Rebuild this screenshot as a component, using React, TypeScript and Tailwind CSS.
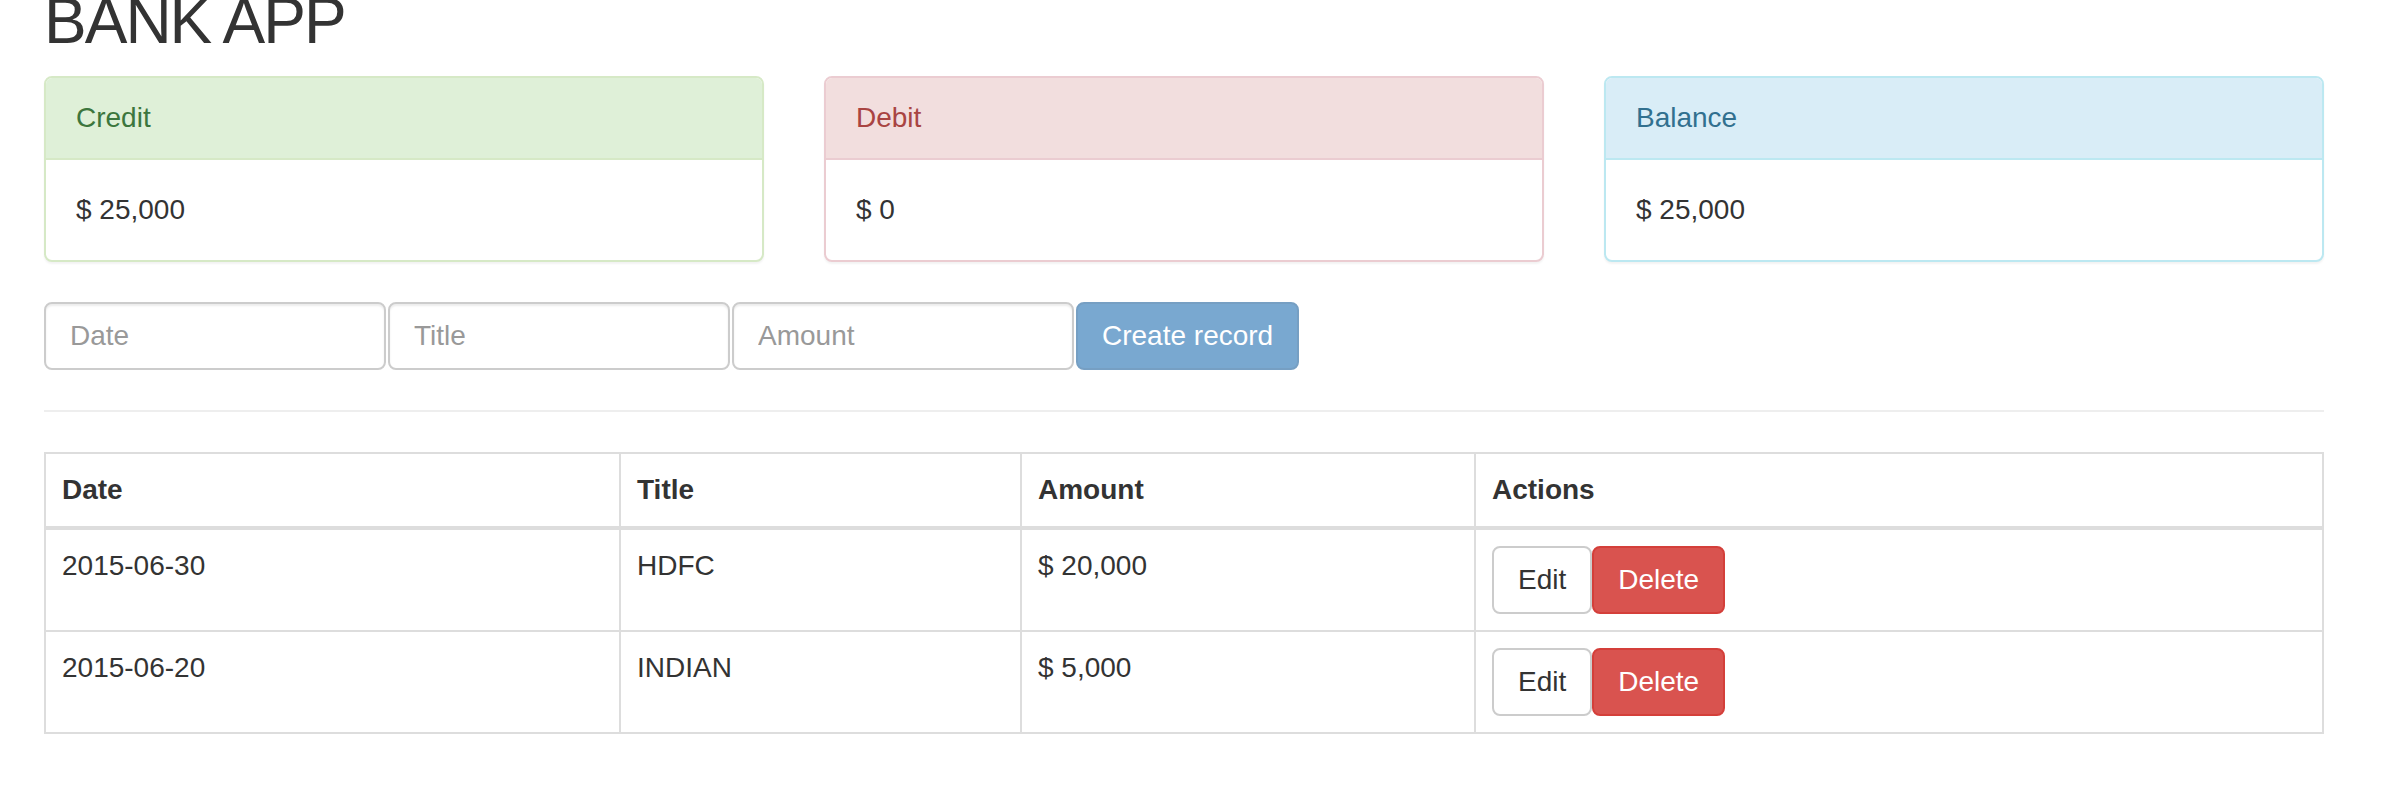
import React from "react";

type Panel = {
  title: string;
  value: string;
  border: string;
  head: string;
};

const panels: Panel[] = [
  {
    title: "Credit",
    value: "$ 25,000",
    border: "border-[#d6e9c6]",
    head: "bg-[#dff0d8] text-[#3c763d] border-[#d6e9c6]",
  },
  {
    title: "Debit",
    value: "$ 0",
    border: "border-[#ebccd1]",
    head: "bg-[#f2dede] text-[#a94442] border-[#ebccd1]",
  },
  {
    title: "Balance",
    value: "$ 25,000",
    border: "border-[#bce8f1]",
    head: "bg-[#d9edf7] text-[#31708f] border-[#bce8f1]",
  },
];

const records = [
  { date: "2015-06-30", title: "HDFC", amount: "$ 20,000" },
  { date: "2015-06-20", title: "INDIAN", amount: "$ 5,000" },
];

const inputCls =
  "w-[342px] h-[68px] border-2 border-[#ccc] rounded-[8px] px-[24px] text-[28px] text-[#555] placeholder:text-[#999] shadow-[inset_0_2px_2px_rgba(0,0,0,0.075)] outline-none bg-white";

const cellCls = "border-2 border-[#ddd] p-[16px] text-left align-top";

export default function App() {
  return (
    <div
      className="bg-white min-h-screen px-[44px] text-[28px] leading-[40px] text-[#333]"
      style={{ fontFamily: '"Liberation Sans", Arial, sans-serif' }}
    >
      <div className="w-[2280px]">
        <h1 className="text-[64px] leading-[42px] tracking-[-2px] font-normal mb-[34px] text-[#333]">
          BANK APP
        </h1>

        <div className="grid grid-cols-3 gap-[60px] mb-[40px]">
          {panels.map((p) => (
            <div
              key={p.title}
              className={`border-2 ${p.border} rounded-[8px] bg-white shadow-[0_2px_2px_rgba(0,0,0,0.05)]`}
            >
              <div
                className={`${p.head} border-b-2 px-[30px] py-[20px] rounded-t-[6px]`}
              >
                {p.title}
              </div>
              <div className="p-[30px]">{p.value}</div>
            </div>
          ))}
        </div>

        <form className="flex gap-[2px]" onSubmit={(e) => e.preventDefault()}>
          <input className={inputCls} placeholder="Date" />
          <input className={inputCls} placeholder="Title" />
          <input className={inputCls} placeholder="Amount" />
          <button
            disabled
            className="h-[68px] px-[24px] border-2 border-[#2e6da4] bg-[#337ab7] text-white rounded-[8px] opacity-65 text-[28px]"
          >
            Create record
          </button>
        </form>

        <hr className="border-0 border-t-2 border-[#eee] my-[40px]" />

        <table className="w-full border-collapse border-2 border-[#ddd]">
          <thead>
            <tr>
              <th className={`${cellCls} w-[575px] border-b-4 font-bold`}>Date</th>
              <th className={`${cellCls} w-[401px] border-b-4 font-bold`}>Title</th>
              <th className={`${cellCls} w-[454px] border-b-4 font-bold`}>Amount</th>
              <th className={`${cellCls} border-b-4 font-bold`}>Actions</th>
            </tr>
          </thead>
          <tbody>
            {records.map((r) => (
              <tr key={r.date}>
                <td className={cellCls}>{r.date}</td>
                <td className={cellCls}>{r.title}</td>
                <td className={cellCls}>{r.amount}</td>
                <td className={cellCls}>
                  <div className="flex">
                    <button className="h-[68px] px-[24px] border-2 border-[#ccc] bg-white text-[#333] rounded-[8px]">
                      Edit
                    </button>
                    <button className="h-[68px] px-[24px] border-2 border-[#d43f3a] bg-[#d9534f] text-white rounded-[8px]">
                      Delete
                    </button>
                  </div>
                </td>
              </tr>
            ))}
          </tbody>
        </table>
      </div>
    </div>
  );
}
